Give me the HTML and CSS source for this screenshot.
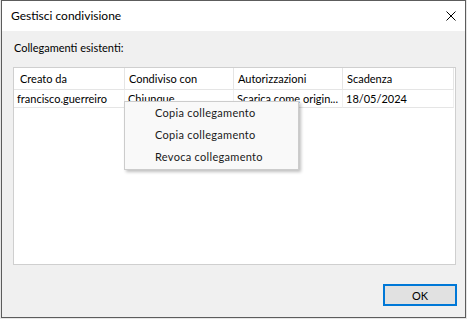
FILE: index.html
```html
<!DOCTYPE html>
<html lang="it">
<head>
<meta charset="utf-8">
<title>Gestisci condivisione</title>
<link rel="stylesheet" href="styles.css">
</head>
<body>
<div class="window">
  <div class="titlebar">
    <span class="title">Gestisci condivisione</span>
    <svg class="close" width="10" height="10" viewBox="0 0 10 10"><path d="M0.5 0.5 L9.5 9.5 M9.5 0.5 L0.5 9.5" stroke="#000" stroke-width="1" fill="none"/></svg>
  </div>
  <div class="content">
    <div class="label">Collegamenti esistenti:</div>
    <div class="listview">
      <div class="row header">
        <div class="cell c1">Creato da</div>
        <div class="cell c2">Condiviso con</div>
        <div class="cell c3">Autorizzazioni</div>
        <div class="cell c4">Scadenza</div>
      </div>
      <div class="row item">
        <div class="cell c1">francisco.guerreiro</div>
        <div class="cell c2">Chiunque</div>
        <div class="cell c3">Scarica come origin...</div>
        <div class="cell c4">18/05/2024</div>
      </div>
    </div>
    <div class="footer">
      <button class="ok">OK</button>
    </div>
  </div>
  <div class="menu">
    <div class="menu-item">Copia collegamento</div>
    <div class="menu-item">Copia collegamento</div>
    <div class="menu-item">Revoca collegamento</div>
  </div>
</div>
</body>
</html>
```
FILE: styles.css
```css
html, body {
  margin: 0;
  padding: 0;
}
body {
  width: 467px;
  height: 319px;
  overflow: hidden;
  background: #e6e6e6;
  font-family: Lato, "Noto Sans", sans-serif;
  font-size: 11px;
  color: #000;
}
.window {
  box-sizing: border-box;
  margin-left: 1px;
  width: 465px;
  height: 318px;
  border: 1px solid #5c5c5c;
  background: #f0f0f0;
  display: flex;
  flex-direction: column;
  position: relative;
}
.titlebar {
  height: 30px;
  flex: none;
  background: #fff;
  display: flex;
  align-items: center;
  padding: 0 9px 0 9px;
}
.title {
  flex: 1;
  font-size: 12px;
  line-height: 16px;
}
.close {
  display: block;
  margin-top: -1px;
}
.content {
  flex: 1;
  display: flex;
  flex-direction: column;
  padding: 9px 9px 11px 11px;
}
.label {
  line-height: 16px;
  height: 16px;
  padding-left: 1px;
}
.listview {
  margin-top: 11px;
  height: 198px;
  box-sizing: border-box;
  border: 1px solid #cfcfcf;
  background: #fff;
}
.row {
  display: flex;
}
.cell {
  box-sizing: border-box;
  white-space: nowrap;
  overflow: hidden;
  border-right: 1px solid #e5e5e5;
}
.c1 { width: 111px; }
.c2 { width: 109px; }
.c3 { width: 109px; }
.c4 { width: 111px; }
.header .cell {
  height: 22px;
  line-height: 22px;
  padding-left: 6px;
  color: #000;
  border-bottom: 1px solid #e5e5e5;
}
.header .c2, .header .c3, .header .c4 { padding-left: 4px; }
.item .cell {
  height: 18px;
  line-height: 16px;
  padding-top: 1px;
  padding-left: 3px;
  border-right-color: #f0f0f0;
  border-bottom: 1px solid #e5e5e5;
}
.footer {
  flex: 1;
  display: flex;
  justify-content: flex-end;
  align-items: flex-end;
}
.ok {
  width: 74px;
  height: 22px;
  box-sizing: border-box;
  border: 2px solid #0078d7;
  background: #e1e1e1;
  font-family: inherit;
  font-size: 11px;
  color: #000;
  padding: 0;
  margin-right: -1px;
}
.menu {
  position: absolute;
  left: 122px;
  top: 100px;
  width: 175px;
  box-sizing: border-box;
  border: 1px solid #cccccc;
  background: #f9f9f9;
  padding: 0 0 1px;
  box-shadow: 2px 2px 3px rgba(0,0,0,0.25);
}
.menu-item {
  height: 22px;
  line-height: 22px;
  padding-left: 30px;
  color: #1a1a1a;
  letter-spacing: 0.3px;
}
```
